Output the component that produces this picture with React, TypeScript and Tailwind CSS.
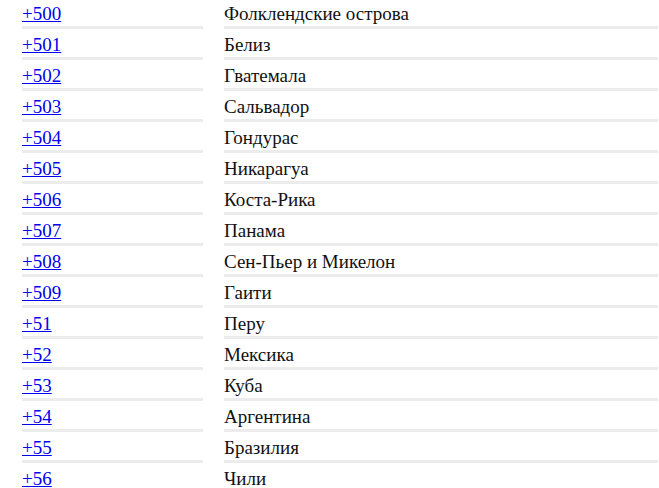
const codes: [string, string][] = [
  ['+500', 'Фолклендские острова'],
  ['+501', 'Белиз'],
  ['+502', 'Гватемала'],
  ['+503', 'Сальвадор'],
  ['+504', 'Гондурас'],
  ['+505', 'Никарагуа'],
  ['+506', 'Коста-Рика'],
  ['+507', 'Панама'],
  ['+508', 'Сен-Пьер и Микелон'],
  ['+509', 'Гаити'],
  ['+51', 'Перу'],
  ['+52', 'Мексика'],
  ['+53', 'Куба'],
  ['+54', 'Аргентина'],
  ['+55', 'Бразилия'],
  ['+56', 'Чили'],
];

export default function App() {
  return (
    <div className="bg-white h-[488px] overflow-hidden pl-[22px] pr-[1px] font-['Liberation_Serif',serif] text-[19px] leading-[22px] text-[#111]">
      <div className="flex flex-col gap-[2px]">
        {codes.map(([code, country]) => (
          <div key={code} className="flex gap-[21px]">
            <div className="w-[181px] h-[29px] pt-[3px] border-b-[3px] border-[#ececec]">
              <a href="#" className="text-[#0000ee] underline">{code}</a>
            </div>
            <div className="flex-1 h-[29px] pt-[3px] border-b-[3px] border-[#ececec]">{country}</div>
          </div>
        ))}
      </div>
    </div>
  );
}
